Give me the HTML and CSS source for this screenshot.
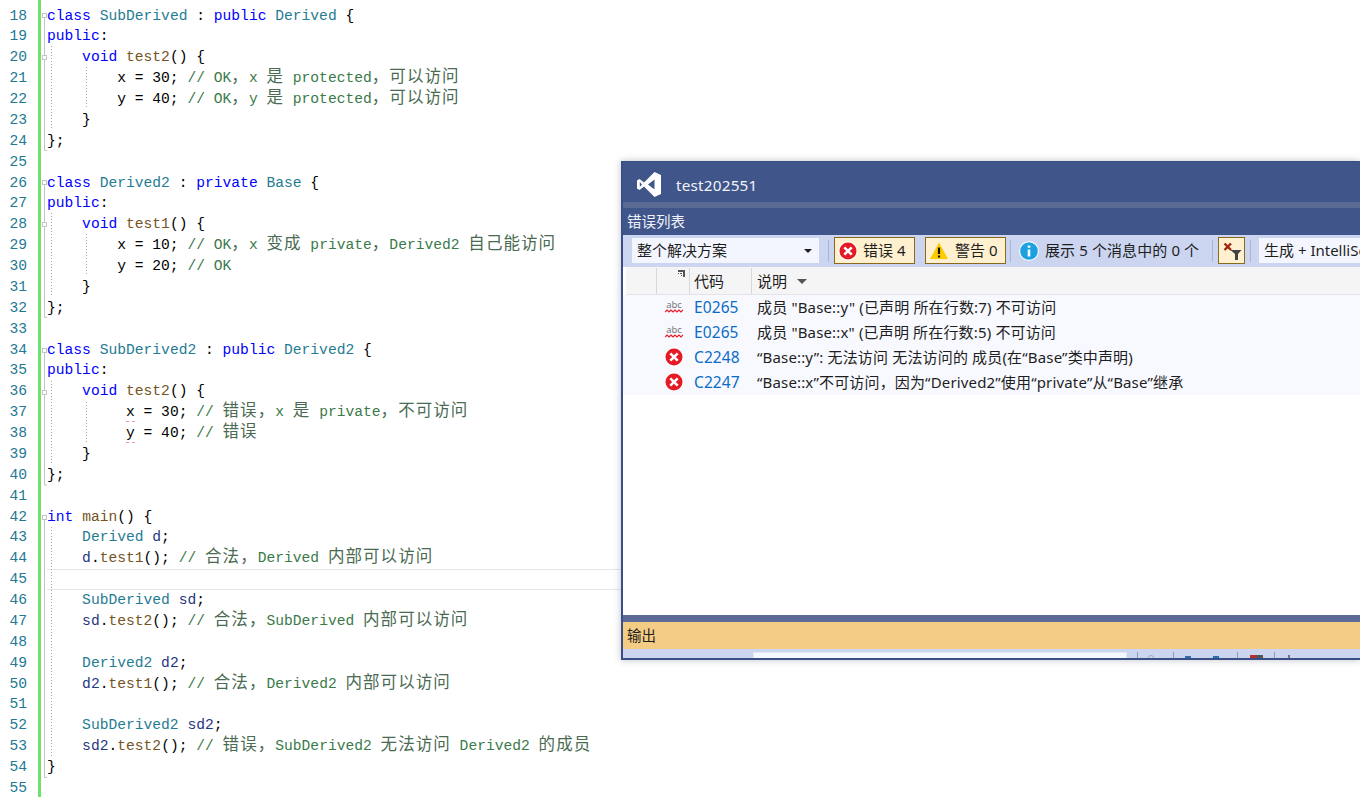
FILE: index.html
```html
<!DOCTYPE html>
<html lang="zh-CN">
<head>
<meta charset="utf-8">
<title>test202551</title>
<link rel="stylesheet" href="styles.css">
</head>
<body>
<main class="editor">
  <div class="nums">
    <div>18</div><div>19</div><div>20</div><div>21</div><div>22</div><div>23</div><div>24</div><div>25</div><div>26</div><div>27</div>
    <div>28</div><div>29</div><div>30</div><div>31</div><div>32</div><div>33</div><div>34</div><div>35</div><div>36</div><div>37</div>
    <div>38</div><div>39</div><div>40</div><div>41</div><div>42</div><div>43</div><div>44</div><div>45</div><div>46</div><div>47</div>
    <div>48</div><div>49</div><div>50</div><div>51</div><div>52</div><div>53</div><div>54</div><div>55</div>
  </div>
  <div class="bar"></div>
  <div class="code">
<div class="l"><b>class</b> <i>SubDerived</i> : <b>public</b> <i>Derived</i> {</div>
<div class="l"><b>public</b>:</div>
<div class="l">    <b>void</b> <u>test2</u>() {</div>
<div class="l">        x = 30; <em>// OK<s>，</s>x <s>是</s> protected<s>，可以访问</s></em></div>
<div class="l">        y = 40; <em>// OK<s>，</s>y <s>是</s> protected<s>，可以访问</s></em></div>
<div class="l">    }</div>
<div class="l">};</div>
<div class="l"></div>
<div class="l"><b>class</b> <i>Derived2</i> : <b>private</b> <i>Base</i> {</div>
<div class="l"><b>public</b>:</div>
<div class="l">    <b>void</b> <u>test1</u>() {</div>
<div class="l">        x = 10; <em>// OK<s>，</s>x <s>变成</s> private<s>，</s>Derived2 <s>自己能访问</s></em></div>
<div class="l">        y = 20; <em>// OK</em></div>
<div class="l">    }</div>
<div class="l">};</div>
<div class="l"></div>
<div class="l"><b>class</b> <i>SubDerived2</i> : <b>public</b> <i>Derived2</i> {</div>
<div class="l"><b>public</b>:</div>
<div class="l">    <b>void</b> <u>test2</u>() {</div>
<div class="l">         <span class="sq">x</span> = 30; <em>// <s>错误，</s>x <s>是</s> private<s>，不可访问</s></em></div>
<div class="l">         <span class="sq">y</span> = 40; <em>// <s>错误</s></em></div>
<div class="l">    }</div>
<div class="l">};</div>
<div class="l"></div>
<div class="l"><b>int</b> <u>main</u>() {</div>
<div class="l">    <i>Derived</i> <var>d</var>;</div>
<div class="l">    <var>d</var>.<u>test1</u>(); <em>// <s>合法，</s>Derived <s>内部可以访问</s></em></div>
<div class="l cur"></div>
<div class="l">    <i>SubDerived</i> <var>sd</var>;</div>
<div class="l">    <var>sd</var>.<u>test2</u>(); <em>// <s>合法，</s>SubDerived <s>内部可以访问</s></em></div>
<div class="l"></div>
<div class="l">    <i>Derived2</i> <var>d2</var>;</div>
<div class="l">    <var>d2</var>.<u>test1</u>(); <em>// <s>合法，</s>Derived2 <s>内部可以访问</s></em></div>
<div class="l"></div>
<div class="l">    <i>SubDerived2</i> <var>sd2</var>;</div>
<div class="l">    <var>sd2</var>.<u>test2</u>(); <em>// <s>错误，</s>SubDerived2 <s>无法访问</s> Derived2 <s>的成员</s></em></div>
<div class="l">}</div>
<div class="l"></div>
  </div>
  <svg class="outline" width="100" height="797" viewBox="0 0 100 797" aria-hidden="true">
    <g class="solid">
      <path d="M44.5 18V150.5H47M44.5 185V317.5H47M44.5 353V485H47M44.5 520V777.5H47"/>
      <rect x="42.500" y="13.500" width="4" height="4"/>
      <rect x="42.500" y="55.500" width="4" height="4"/>
      <rect x="42.500" y="180.500" width="4" height="4"/>
      <rect x="42.500" y="222.500" width="4" height="4"/>
      <rect x="42.500" y="348.500" width="4" height="4"/>
      <rect x="42.500" y="390.500" width="4" height="4"/>
      <rect x="42.500" y="515.500" width="4" height="4"/>
    </g>
    <path class="dots" d="M51.500 46V128M51.500 213V296M51.500 381V463M51.500 527V757M86.500 67V108M86.500 234V275M86.500 402V443"/>
  </svg>
</main>

<section class="window">
  <header class="title">
    <svg class="logo" width="24" height="25" viewBox="0 0 24 25"><path fill-rule="evenodd" fill="#fff" d="M17.500 0L24 3V22L17.500 25L7 14.500L2.500 18L0 16.500V8.500L2.500 7L7 10.500ZM17.500 7.500L11 12.500L17.500 17.500ZM2.800 10V15L5 12.500Z"/></svg>
    <span>test202551</span>
  </header>
  <div class="strip"></div>
  <div class="panel-title">错误列表</div>
  <div class="toolbar">
    <div class="combo wide"><span class="tx">整个解决方案</span><span class="caret"></span></div>
    <span class="sep"></span>
    <div class="toggle t-err">
      <svg width="20" height="20" viewBox="0 0 20 20"><circle cx="10" cy="10" r="9.500" fill="#fff"/><circle cx="10" cy="10" r="8.500" fill="#e51a24"/><path d="M6.300 6.300L13.700 13.700M13.700 6.300L6.300 13.700" stroke="#fff" stroke-width="2.600"/></svg>
      <span class="tx">错误 4</span>
    </div>
    <span class="sep s-gap"></span>
    <div class="toggle t-warn">
      <svg width="20" height="20" viewBox="0 0 20 20"><path d="M10 1.500L19 18H1Z" fill="#fc0"/><path d="M10 6.500V13M10 14.500V16.500" stroke="#111" stroke-width="2.200"/></svg>
      <span class="tx">警告 0</span>
    </div>
    <span class="sep s-msg"></span>
    <div class="msg">
      <svg width="20" height="20" viewBox="0 0 20 20"><circle cx="10" cy="10" r="9.800" fill="#fff"/><circle cx="10" cy="10" r="8.800" fill="#1ba1e2"/><path d="M10 8.500V15.500M10 4.500V6.800" stroke="#fff" stroke-width="2.600"/></svg>
      <span class="tx">展示 5 个消息中的 0 个</span>
    </div>
    <span class="sep"></span>
    <div class="toggle t-filter">
      <svg width="22" height="20" viewBox="0 0 22 20"><path d="M3.500 2.500L10 9M10 2.500L3.500 9" stroke="#a1260d" stroke-width="2.400"/><path d="M9.500 9H20.500L17 13V19H14V13Z" fill="#424242"/></svg>
    </div>
    <span class="sep s-last"></span>
    <div class="combo build"><span class="tx">生成 + IntelliSense</span></div>
  </div>
  <div class="grid">
    <div class="head">
      <div class="c-a"></div>
      <div class="c-b"><svg width="7" height="7" viewBox="0 0 7 7"><path d="M0 0H7V7H5V2H0ZM0 3H1V4H0ZM2 3H4V4H2ZM3 5H4V6H3Z" fill="#555"/></svg></div>
      <div class="c-code">代码</div>
      <div class="c-desc">说明<span class="sort"></span></div>
    </div>
    <div class="row">
      <div class="ico"><span class="abc">abc<svg width="18" height="4" viewBox="0 0 18 4"><path d="M0 3L2 1L4 3L6 1L8 3L10 1L12 3L14 1L16 3L18 1" fill="none" stroke="#e51a24" stroke-width="1.200"/></svg></span></div>
      <div class="cd">E0265</div>
      <div class="ds">成员 "Base::y" (已声明 所在行数:7) 不可访问</div>
    </div>
    <div class="row">
      <div class="ico"><span class="abc">abc<svg width="18" height="4" viewBox="0 0 18 4"><path d="M0 3L2 1L4 3L6 1L8 3L10 1L12 3L14 1L16 3L18 1" fill="none" stroke="#e51a24" stroke-width="1.200"/></svg></span></div>
      <div class="cd">E0265</div>
      <div class="ds">成员 "Base::x" (已声明 所在行数:5) 不可访问</div>
    </div>
    <div class="row">
      <div class="ico"><svg width="20" height="20" viewBox="0 0 20 20"><circle cx="10" cy="10" r="9.500" fill="#fff"/><circle cx="10" cy="10" r="8.500" fill="#e51a24"/><path d="M6.300 6.300L13.700 13.700M13.700 6.300L6.300 13.700" stroke="#fff" stroke-width="2.600"/></svg></div>
      <div class="cd">C2248</div>
      <div class="ds">“Base::y”: 无法访问 无法访问的 成员(在“Base”类中声明)</div>
    </div>
    <div class="row">
      <div class="ico"><svg width="20" height="20" viewBox="0 0 20 20"><circle cx="10" cy="10" r="9.500" fill="#fff"/><circle cx="10" cy="10" r="8.500" fill="#e51a24"/><path d="M6.300 6.300L13.700 13.700M13.700 6.300L6.300 13.700" stroke="#fff" stroke-width="2.600"/></svg></div>
      <div class="cd">C2247</div>
      <div class="ds">“Base::x”不可访问，因为“Derived2”使用“private”从“Base”继承</div>
    </div>
  </div>
  <div class="band"></div>
  <div class="output">输出</div>
  <div class="tools2">
    <div class="mini-input"></div>
    <span class="m-sep m1"></span>
    <span class="m-i i-arc"></span>
    <span class="m-sep m2"></span>
    <span class="m-i i-arr a1"></span>
    <span class="m-i i-arr a2"></span>
    <span class="m-sep m3"></span>
    <span class="m-i i-red"></span>
    <span class="m-i i-dark"></span>
    <span class="m-sep m4"></span>
    <span class="m-i i-gray"></span>
  </div>
</section>
</body>
</html>
```
FILE: styles.css
```css
* { box-sizing: border-box; }
html, body { margin: 0; padding: 0; height: 797px; overflow: hidden; background: #fff; }

.editor {
  position: relative;
  display: flex;
  height: 797px;
  padding-top: 5.6px;
  font: 14.63px/20.89px "Liberation Mono", "Noto Sans CJK SC", monospace;
  color: #000;
}
.nums { width: 38px; padding-right: 11px; text-align: right; color: #237893; flex: none; }
.nums div { height: 20.89px; }
.bar { width: 3px; flex: none; margin-top: -5.6px; background: #6fe16f; }
.code { flex: 1; margin-left: 6px; }
.l { height: 20.89px; white-space: pre; }
.l.cur { border-top: 1px solid #e6e6ea; border-bottom: 1px solid #e6e6ea; }
.l b { font-weight: 400; color: #0000ff; }
.l i { font-style: normal; color: #1f7c92; }
.l u { text-decoration: none; color: #74531f; }
.l var { font-style: normal; color: #1f377f; }
.l em { font-style: normal; color: #3a7a4a; }
.l s {
  text-decoration: none;
  font-family: "Noto Sans CJK SC", sans-serif;
  font-size: 16.5px;
  letter-spacing: 1.06px;
  line-height: 0;
  color: #4a6a52;
}
.sq { border-bottom: 1px dashed #f09a9a; padding-bottom: 1px; }

.outline { position: absolute; left: 0; top: 0; }
.solid { fill: #fff; stroke: #c4c4c4; stroke-width: 1; }
.solid path { fill: none; }
.dots { fill: none; stroke: #a8a8a8; stroke-width: 1; stroke-dasharray: 1 2; }

.window {
  position: absolute;
  left: 621px;
  top: 161px;
  width: 739px;
  height: 499px;
  display: flex;
  flex-direction: column;
  overflow: hidden;
  background: #fff;
  border: 2px solid #3a4f85;
  border-top-width: 1px;
  border-right-width: 0;
  box-shadow: 0 0 7px rgba(40, 50, 90, .3);
  font: 15px/20px "Noto Sans", "Noto Sans CJK SC", sans-serif;
  color: #1e1e1e;
}
.title {
  height: 40px;
  flex: none;
  display: flex;
  align-items: center;
  gap: 15px;
  padding: 5px 0 0 14px;
  background: #40568b;
  color: #f1f3f9;
  font-size: 15.3px;
  letter-spacing: .2px;
}
.logo { flex: none; }
.strip { height: 6px; flex: none; background: #5b6a95; }
.panel-title {
  height: 27px;
  flex: none;
  padding: 3px 0 0 4px;
  background: #40568b;
  color: #f1f3f9;
  font-size: 14.5px;
}
.toolbar {
  height: 32px;
  flex: none;
  display: flex;
  align-items: center;
  padding: 0 0 1px 9px;
  background: #ccd5f0;
  white-space: nowrap;
}
.tx { margin-bottom: 2px; }
.combo {
  height: 25px;
  display: flex;
  align-items: center;
  justify-content: space-between;
  padding: 0 5px;
  background: #f3f6fe;
  color: #1e1e1e;
  flex: none;
}
.combo.wide { width: 187px; }
.combo.build { width: 120px; margin-left: 8px; overflow: hidden; justify-content: flex-start; }
.caret { width: 0; height: 0; border: 4px solid transparent; border-top: 4px solid #1e1e1e; border-bottom: 0; margin-right: 2px; }
.sep { width: 1px; height: 22px; flex: none; margin: 0 5px 0 9px; background: #a9b4d0; }
.sep.s-gap { margin: 0 5px 0 4px; background: transparent; }
.sep.s-msg { margin-left: 4px; }
.sep.s-last { margin: 0 0 0 5px; }
.toggle {
  height: 27px;
  display: flex;
  align-items: center;
  gap: 5px;
  padding-left: 3px;
  background: #fff0d0;
  border: 1px solid #8a6a1a;
  flex: none;
}
.t-err { width: 81px; }
.t-warn { width: 81px; gap: 6px; }
.t-filter { width: 27px; padding-left: 2px; }
.msg { width: 187px; display: flex; align-items: center; gap: 6px; padding-left: 3px; flex: none; color: #1e1e1e; letter-spacing: .1px; }
.grid { height: 348px; flex: none; background: #fff; }
.head {
  height: 28px;
  display: flex;
  margin-left: 3px;
  background: #f5f5f5;
  border-bottom: 1px solid #e3e3e8;
  padding-top: 1px;
}
.head > div { height: 26px; display: flex; align-items: center; border-right: 1px solid #d5d8e2; flex: none; }
.c-a { width: 31px; }
.c-b { width: 33px; align-items: flex-start !important; justify-content: flex-end; padding: 2px 4px 0 0; }
.c-code { width: 62px; padding-left: 4px; }
.head > .c-desc { width: auto; border-right: 0; padding-left: 5px; gap: 8px; }
.sort { width: 0; height: 0; border: 5px solid transparent; border-top: 5px solid #555; border-bottom: 0; margin-left: 2px; }
.row {
  height: 25px;
  display: flex;
  align-items: center;
  padding-bottom: 2px;
  background: #f8f9ff;
  white-space: nowrap;
}
.ico { width: 71px; padding-left: 41px; flex: none; display: flex; align-items: center; }
.abc { display: block; width: 20px; font-size: 9.500px; line-height: 9px; color: #777; text-align: center; }
.abc svg { display: block; margin: 0 auto; }
.cd { width: 63px; flex: none; color: #0a6cc8; font-size: 15.500px; letter-spacing: .1px; }
.ds { flex: none; letter-spacing: .16px; }
.band { height: 7px; flex: none; background: #5d6b99; }
.output { height: 27px; flex: none; padding: 3px 0 0 4px; background: #f5cc84; font-size: 14.500px; color: #1e1e1e; }
.tools2 { flex: 1; background: #ccd5f0; position: relative; overflow: hidden; }
.mini-input { position: absolute; left: 130px; top: 3px; width: 374px; height: 20px; background: #f6f8ff; border: 1px solid #e3e8f8; }
.m-sep { position: absolute; top: 3px; width: 1px; height: 20px; background: #8f9ab8; }
.m1 { left: 514px; }
.m2 { left: 550px; }
.m3 { left: 614px; }
.m4 { left: 651px; }
.m-i { position: absolute; top: 6px; height: 6px; }
.i-arc { left: 525px; width: 6px; border: 1px solid #a8a8b0; border-radius: 3px 3px 0 0; }
.i-arr { top: 7px; width: 6px; height: 3px; background: #2a6fb0; }
.a1 { left: 562px; }
.a2 { left: 590px; }
.i-red { left: 627px; width: 6px; background: #b8302a; }
.i-dark { left: 633px; width: 7px; background: #555; }
.i-gray { left: 665px; width: 2px; background: #777; }
```
